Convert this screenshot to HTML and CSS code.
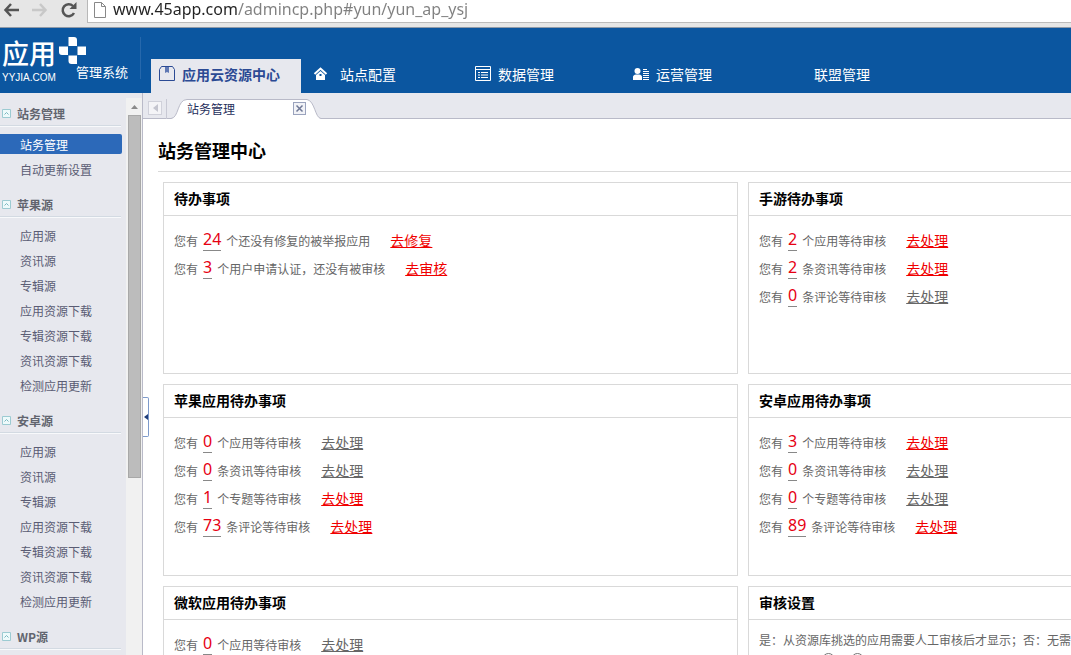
FILE: index.html
```html
<!DOCTYPE html>
<html lang="zh-CN">
<head>
    <meta charset="UTF-8">
    <meta name="viewport" content="width=device-width, initial-scale=1.0">
    <title>管理系统</title>
    <link rel="stylesheet" href="styles.css">
</head>
<body>
    <div class="browser">
        <button class="browser-btn" aria-label="后退"><svg width="16" height="14" viewBox="0 0 16 14"><path d="M8 1L2.500 7L8 13M3 7H16" fill="none" stroke="#555" stroke-width="2.500"/></svg></button>
        <button class="browser-btn" aria-label="前进"><svg width="16" height="14" viewBox="0 0 16 14"><path d="M8 1L13.500 7L8 13M13 7H0" fill="none" stroke="#c8c8c8" stroke-width="2.500"/></svg></button>
        <button class="browser-btn" aria-label="刷新"><svg width="16" height="16" viewBox="0 0 16 16"><path d="M13 11A6 6 0 1 1 12 4" fill="none" stroke="#555" stroke-width="2.500"/><path d="M15.500 0V7H8.500z" fill="#555"/></svg></button>
        <div class="address">
            <svg width="12" height="16" viewBox="0 0 12 16"><path d="M.5 .5H7.500L11.500 4.500V15.500H.5zM7.500 .5V4.500H11.500" fill="#fff" stroke="#888"/></svg>
            <input class="url" type="text" aria-label="地址" value="www.45app.com/admincp.php#yun/yun_ap_ysj">
        </div>
    </div>
    <header class="header">
        <div class="brand">
            <div class="logo">
                <span class="logo-name">应用</span>
                <span class="logo-site">YYJIA.COM</span>
            </div>
            <div class="logo-side">
                <svg width="28" height="28" viewBox="0 0 28 28"><path d="M9.500 0H15Q18 0 18 3V9H9.500zM0 9.500H9V18H3Q0 18 0 15zM18.500 9.500H27V18H18.500zM9.500 18.500H18V27H12.500Q9.500 27 9.500 24z" fill="#fff"/></svg>
                <span class="logo-system">管理系统</span>
            </div>
        </div>
        <nav class="nav">
            <a href="#yun" class="nav-item active">
                <svg width="16" height="16" viewBox="0 0 16 16"><path d="M.5 3.500L2.500 .5H13.500L15.500 3.500V14.500H.5z" fill="none" stroke="#2b4a94"/><path d="M6 1H10V7L8 6L6 7z" fill="#5f78b4"/></svg>
                应用云资源中心</a>
            <a href="#site" class="nav-item">
                <svg width="16" height="16" viewBox="0 0 16 16"><path d="M-2.500 8L3.500 2.500L9.500 8" fill="none" stroke="#fff" stroke-width="2"/><path d="M3.500 5L8 9V14H-1V9z" fill="#fff"/><path d="M2.500 8H4.500V10H2.500z" fill="#0b56a0"/></svg>
                站点配置</a>
            <a href="#data" class="nav-item">
                <svg width="16" height="16" viewBox="0 0 16 16"><path d="M.5 .5H15.500V14.500H.5zM.5 3.500H15.500M3 6.500H5M6 6.500H13M3 9H5M6 9H13M3 11.500H5M6 11.500H13" fill="none" stroke="#fff"/></svg>
                数据管理</a>
            <a href="#run" class="nav-item">
                <svg width="16" height="16" viewBox="0 0 16 16"><circle cx="4.500" cy="5" r="3" fill="#fff"/><path d="M0 14V11Q0 9 3 8.500H6Q9 9 9 11V14z" fill="#fff"/><path d="M10 3.500H14M10 5.500H16M10 7.500H16M10 9.500H16M10 11.500H16M10 13.500H16" stroke="#fff"/></svg>
                运营管理</a>
            <a href="#union" class="nav-item">
                <svg width="16" height="16"></svg>
                联盟管理</a>
        </nav>
    </header>
    <div class="wrap">
        <aside class="sidebar">
            <div class="menu">
                <section>
                    <h3><svg width="9" height="9" viewBox="0 0 9 9"><path d="M.5 .5H8.500V8.500H.5z" fill="#eefafb" stroke="#9ccbd2"/><path d="M2.500 5.500L4.500 3.500L6.500 5.500" fill="none" stroke="#7ab6c0"/></svg>站务管理</h3>
                    <ul>
                        <li><a href="#" class="current">站务管理</a></li>
                        <li><a href="#">自动更新设置</a></li>
                    </ul>
                </section>
                <section>
                    <h3><svg width="9" height="9" viewBox="0 0 9 9"><path d="M.5 .5H8.500V8.500H.5z" fill="#eefafb" stroke="#9ccbd2"/><path d="M2.500 5.500L4.500 3.500L6.500 5.500" fill="none" stroke="#7ab6c0"/></svg>苹果源</h3>
                    <ul>
                        <li><a href="#">应用源</a></li>
                        <li><a href="#">资讯源</a></li>
                        <li><a href="#">专辑源</a></li>
                        <li><a href="#">应用资源下载</a></li>
                        <li><a href="#">专辑资源下载</a></li>
                        <li><a href="#">资讯资源下载</a></li>
                        <li><a href="#">检测应用更新</a></li>
                    </ul>
                </section>
                <section>
                    <h3><svg width="9" height="9" viewBox="0 0 9 9"><path d="M.5 .5H8.500V8.500H.5z" fill="#eefafb" stroke="#9ccbd2"/><path d="M2.500 5.500L4.500 3.500L6.500 5.500" fill="none" stroke="#7ab6c0"/></svg>安卓源</h3>
                    <ul>
                        <li><a href="#">应用源</a></li>
                        <li><a href="#">资讯源</a></li>
                        <li><a href="#">专辑源</a></li>
                        <li><a href="#">应用资源下载</a></li>
                        <li><a href="#">专辑资源下载</a></li>
                        <li><a href="#">资讯资源下载</a></li>
                        <li><a href="#">检测应用更新</a></li>
                    </ul>
                </section>
                <section>
                    <h3><svg width="9" height="9" viewBox="0 0 9 9"><path d="M.5 .5H8.500V8.500H.5z" fill="#eefafb" stroke="#9ccbd2"/><path d="M2.500 5.500L4.500 3.500L6.500 5.500" fill="none" stroke="#7ab6c0"/></svg>WP源</h3>
                </section>
            </div>
            <div class="scrollbar">
                <svg width="7" height="4" viewBox="0 0 7 4"><path d="M0 4L3.500 0L7 4z" fill="#8a8a8a"/></svg>
                <div class="thumb"></div>
            </div>
        </aside>
        <main class="main">
            <button class="collapse" aria-label="收起菜单"><svg width="4" height="6" viewBox="0 0 4 6"><path d="M4 0V6L0 3z" fill="#1f3d7a"/></svg></button>
            <div class="tabs">
                <button class="tab-prev" aria-label="向左"><svg width="5" height="8" viewBox="0 0 5 8"><path d="M5 0V8L0 4z" fill="#c4c5cf"/></svg></button>
                <div class="tab">
                    <svg width="16" height="20" viewBox="0 0 16 20"><path d="M0 19.500C8 19 6 .5 16 .5V20H0z" fill="#fff"/><path d="M0 19.500C8 19 6 .5 16 .5" fill="none" stroke="#b9bac8"/></svg>
                    <div class="tab-body">
                        <span>站务管理</span>
                        <button class="tab-close" aria-label="关闭"><svg width="7" height="7" viewBox="0 0 7 7"><path d="M.5 .5L6.500 6.500M6.500 .5L.5 6.500" stroke="#6e7896" stroke-width="1.500"/></svg></button>
                    </div>
                    <svg width="14" height="20" viewBox="0 0 14 20"><path d="M0 .5C8 2 8 19 14 19.500V20H0z" fill="#fff"/><path d="M0 .5C8 2 8 19 14 19.500" fill="none" stroke="#b9bac8"/></svg>
                </div>
            </div>
            <h1>站务管理中心</h1>
            <div class="panels">
                <section class="panel">
                    <h2>待办事项</h2>
                    <ul>
                        <li>您有 <b>24</b> 个还没有修复的被举报应用 <a href="#" class="todo">去修复</a></li>
                        <li>您有 <b>3</b> 个用户申请认证，还没有被审核 <a href="#" class="todo">去审核</a></li>
                    </ul>
                </section>
                <section class="panel">
                    <h2>手游待办事项</h2>
                    <ul>
                        <li>您有 <b>2</b> 个应用等待审核 <a href="#" class="todo">去处理</a></li>
                        <li>您有 <b>2</b> 条资讯等待审核 <a href="#" class="todo">去处理</a></li>
                        <li>您有 <b>0</b> 条评论等待审核 <a href="#">去处理</a></li>
                    </ul>
                </section>
                <section class="panel">
                    <h2>苹果应用待办事项</h2>
                    <ul>
                        <li>您有 <b>0</b> 个应用等待审核 <a href="#">去处理</a></li>
                        <li>您有 <b>0</b> 条资讯等待审核 <a href="#">去处理</a></li>
                        <li>您有 <b>1</b> 个专题等待审核 <a href="#" class="todo">去处理</a></li>
                        <li>您有 <b>73</b> 条评论等待审核 <a href="#" class="todo">去处理</a></li>
                    </ul>
                </section>
                <section class="panel">
                    <h2>安卓应用待办事项</h2>
                    <ul>
                        <li>您有 <b>3</b> 个应用等待审核 <a href="#" class="todo">去处理</a></li>
                        <li>您有 <b>0</b> 条资讯等待审核 <a href="#">去处理</a></li>
                        <li>您有 <b>0</b> 个专题等待审核 <a href="#">去处理</a></li>
                        <li>您有 <b>89</b> 条评论等待审核 <a href="#" class="todo">去处理</a></li>
                    </ul>
                </section>
                <section class="panel">
                    <h2>微软应用待办事项</h2>
                    <ul>
                        <li>您有 <b>0</b> 个应用等待审核 <a href="#">去处理</a></li>
                    </ul>
                </section>
                <section class="panel">
                    <h2>审核设置</h2>
                    <div class="setting">
                        <p>是：从资源库挑选的应用需要人工审核后才显示；否：无需</p>
                        <div class="choices">
                            <input type="radio" name="check" aria-label="是">
                            <input type="radio" name="check" aria-label="否">
                        </div>
                    </div>
                </section>
            </div>
        </main>
    </div>
</body>
</html>
```
FILE: styles.css
```css
* {
    box-sizing: border-box;
}
body {
    font-family: "Noto Sans CJK SC", sans-serif;
    font-size: 12px;
    margin: 0;
    height: 100vh;
    display: flex;
    flex-direction: column;
    overflow: hidden;
    background: #fff;
    color: #666;
}
h1, h2, h3, ul, p { margin: 0; padding: 0; }
ul { list-style: none; }
a { color: inherit; }
svg { display: block; flex: none; overflow: visible; }
button {
    padding: 0;
    border: none;
    background: none;
    display: flex;
    align-items: center;
    justify-content: center;
    cursor: pointer;
}

/* browser bar */
.browser {
    height: 28px;
    flex: none;
    display: flex;
    align-items: flex-start;
    padding-left: 3px;
    background: #e6e6e6;
    border-bottom: 1px solid #8f9aa8;
}
.browser-btn { width: 16px; height: 19px; margin-right: 13px; }
.browser-btn + .browser-btn + .browser-btn { margin-right: 10px; }
.address {
    flex: 1;
    height: 23px;
    display: flex;
    align-items: flex-start;
    padding: 2px 0 0 6px;
    background: #fff;
    border-left: 1px solid #b8b8b8;
    border-bottom: 1px solid #bbb;
}
.url {
    flex: 1;
    height: 20px;
    margin-top: -3px;
    padding: 0 0 0 7px;
    border: none;
    font: 16px/20px "Noto Sans", sans-serif;
    color: transparent;
    background: linear-gradient(90deg, #222 132px, #808080 132px);
    -webkit-background-clip: text;
    background-clip: text;
}

/* header */
.header {
    height: 65px;
    flex: none;
    display: flex;
    background: #0b56a0;
    color: #fff;
}
.brand {
    width: 141px;
    height: 42px;
    margin: 9px 10px 0 0;
    padding-left: 2px;
    display: flex;
    gap: 2px;
    border-right: 1px solid #2668ac;
}
.logo { width: 55px; padding-top: 1px; display: flex; flex-direction: column; gap: 4px; }
.logo-name { font-size: 27px; font-weight: 500; line-height: 30px; white-space: nowrap; }
.logo-site { font: 10px/12px "Liberation Sans", sans-serif; }
.logo-system { display: block; font-size: 13px; line-height: 13px; margin-left: 17px; }
.nav { display: flex; align-items: flex-end; gap: 8px; }
.nav-item {
    width: 150px;
    height: 34px;
    padding: 0 0 4px 8px;
    display: flex;
    align-items: center;
    gap: 7px;
    font-size: 14px;
    line-height: 30px;
    white-space: nowrap;
    text-decoration: none;
}
.nav-item.active { background: #e7e8ee; color: #2b4a94; font-weight: bold; }

.wrap { flex: 1; min-height: 0; display: flex; }

/* left menu */
.sidebar {
    width: 143px;
    flex: none;
    display: flex;
    overflow: hidden;
    background: #e7e8ee;
    border-right: 1px solid #b9bac8;
}
.menu { flex: 1; padding-top: 9px; }
.menu section { margin-bottom: 11px; }
.menu h3 {
    height: 24px;
    margin-right: 5px;
    padding-left: 2px;
    display: flex;
    align-items: center;
    gap: 6px;
    font-size: 12px;
    color: #62656f;
    border-bottom: 1px solid #d3dae2;
    box-shadow: 0 1px #f8f9fb;
}
.menu ul { padding-top: 6px; }
.menu li { height: 25px; padding-top: 2px; }
.menu li a {
    display: block;
    height: 20px;
    line-height: 22px;
    margin-right: 4px;
    padding-left: 20px;
    color: #5a5c74;
    text-decoration: none;
}
.menu li .current { background: #2c69b9; color: #fff; border-radius: 0 2px 2px 0; }
.scrollbar {
    width: 16px;
    margin-top: 5px;
    padding: 7px 1px 0 2px;
    display: flex;
    flex-direction: column;
    align-items: center;
    gap: 6px;
    background: #f1f1f1;
}
.thumb { width: 13px; height: 66%; background: #bcbcbc; border: 1px solid #a8a8a8; }

/* content */
.main { flex: 1; min-width: 0; position: relative; overflow: hidden; }
.collapse {
    position: absolute;
    left: 0;
    top: 304px;
    width: 6px;
    height: 40px;
    border: 1px solid #7d9acb;
    border-left: none;
    border-radius: 0 2px 2px 0;
    background: #fff;
}
.tabs {
    height: 26px;
    padding-left: 5px;
    display: flex;
    align-items: flex-end;
    background: #e7e8ee;
    border-bottom: 1px solid #b9bac8;
}
.tab-prev { width: 14px; height: 14px; margin-bottom: 3px; border: 1px solid #d0d1da; background: #f4f4f7; }
.tab { display: flex; margin: 0 0 -1px 4px; padding-left: 4px; border-left: 1px solid #c8c9d4; }
.tab-body {
    width: 120px;
    height: 20px;
    padding: 0 1px 2px 0;
    display: flex;
    align-items: center;
    justify-content: space-between;
    line-height: 16px;
    background: #fff;
    border-top: 1px solid #b9bac8;
    color: #1f2f5c;
}
.tab-close { width: 13px; height: 13px; border: 1px solid #9aa3bd; background: #f2f3f7; }
.main h1 {
    height: 53px;
    margin-left: 15px;
    padding-top: 13px;
    font-size: 18px;
    line-height: 36px;
    color: #000;
    border-bottom: 1px solid #d9d9d9;
}
.panels {
    /* wider than the frame, the right column runs off the edge */
    width: 125%;
    margin: 10px 0 0 20px;
    display: grid;
    grid-template-columns: 1fr 1fr;
    gap: 10px;
}
.panel { min-height: 192px; border: 1px solid #d9d9d9; }
.panel h2 {
    padding: 0 0 2px 10px;
    font-size: 14px;
    line-height: 30px;
    color: #000;
    border-bottom: 1px solid #d9d9d9;
}
.panel ul { padding: 10px; }
.panel li { display: flex; align-items: center; gap: 5px; height: 28px; }
.panel li b {
    font: 16px/21px "Noto Sans", sans-serif;
    color: #e60012;
    border-bottom: 1px solid #888;
}
.panel li a { margin-left: 15px; font-size: 14px; }
.panel li .todo { color: #f00000; }
.setting { padding: 10px; line-height: 20px; }
.setting p { white-space: nowrap; }
.choices { display: flex; gap: 16px; padding: 3px 0 0 63px; }
.choices input { width: 13px; height: 13px; margin: 0; }
```
